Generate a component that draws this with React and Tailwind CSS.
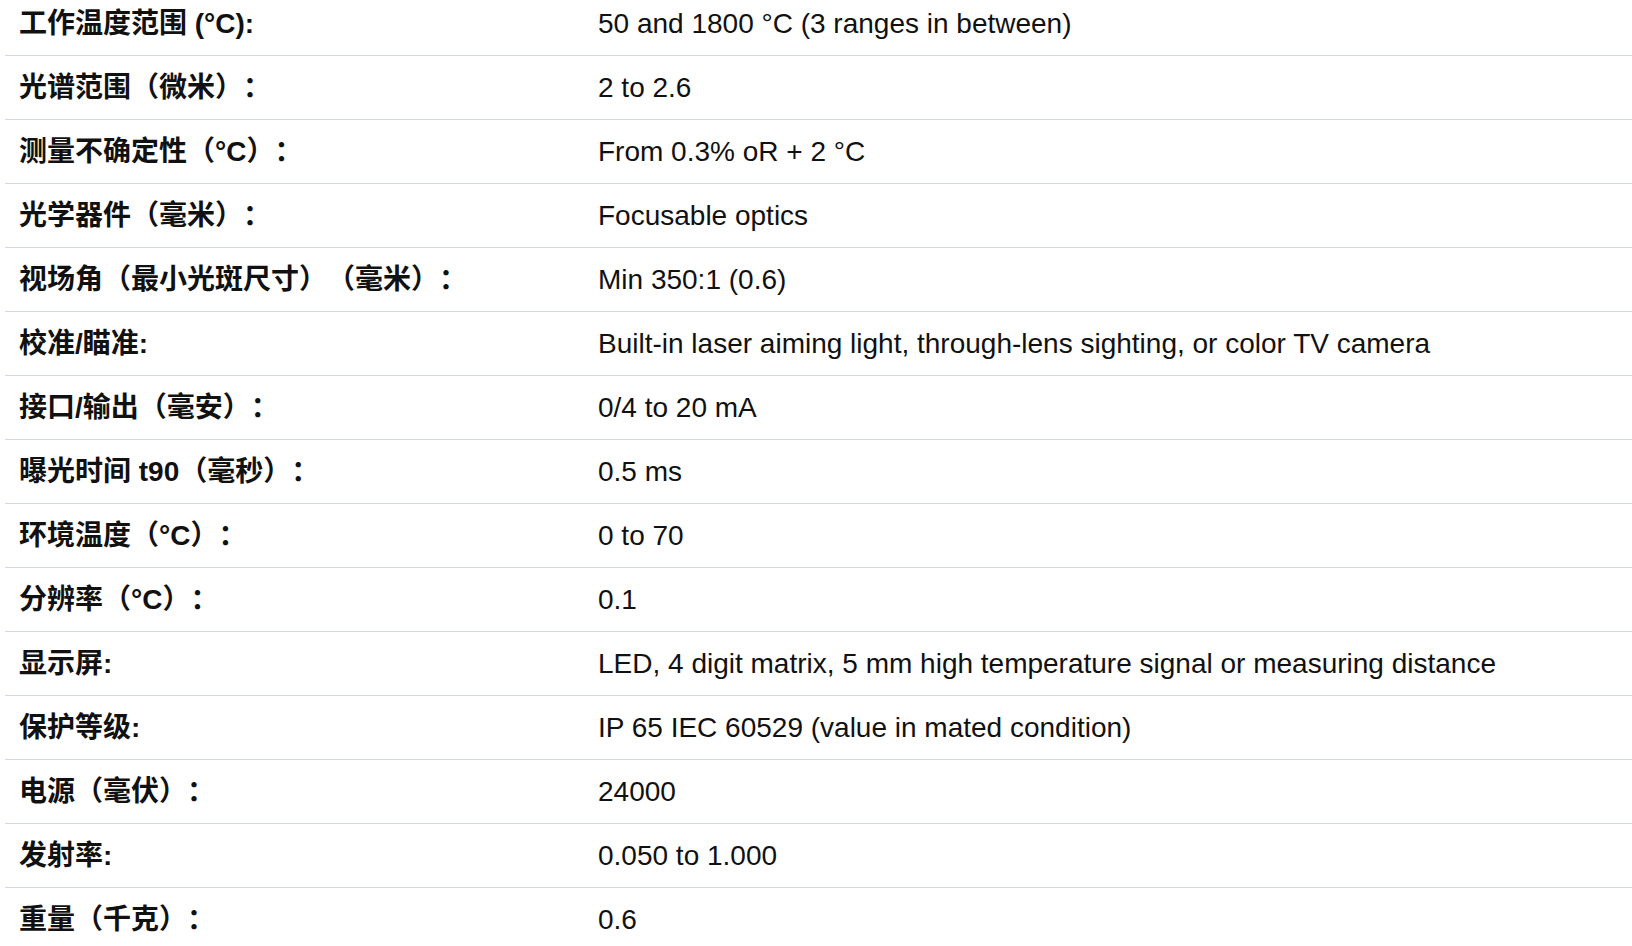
const rows = [
  ["工作温度范围 (°C):", "50 and 1800 °C (3 ranges in between)"],
  ["光谱范围（微米）：", "2 to 2.6"],
  ["测量不确定性（°C）：", "From 0.3% oR + 2 °C"],
  ["光学器件（毫米）：", "Focusable optics"],
  ["视场角（最小光斑尺寸）（毫米）：", "Min 350:1 (0.6)"],
  ["校准/瞄准:", "Built-in laser aiming light, through-lens sighting, or color TV camera"],
  ["接口/输出（毫安）：", "0/4 to 20 mA"],
  ["曝光时间 t90（毫秒）：", "0.5 ms"],
  ["环境温度（°C）：", "0 to 70"],
  ["分辨率（°C）：", "0.1"],
  ["显示屏:", "LED, 4 digit matrix, 5 mm high temperature signal or measuring distance"],
  ["保护等级:", "IP 65 IEC 60529 (value in mated condition)"],
  ["电源（毫伏）：", "24000"],
  ["发射率:", "0.050 to 1.000"],
  ["重量（千克）：", "0.6"],
];

export default function App() {
  return (
    <div className="w-[1632px] h-[946px] overflow-hidden bg-white">
      <div className="ml-[5px] mt-[-8px] flex flex-col">
        {rows.map(([k, v], i) => (
          <div key={i} className="flex h-[64px] items-center border-b border-[#cfd8de]">
            <div
              className="w-[579px] pl-[14px] text-[28px] font-bold text-[#111] whitespace-nowrap [text-spacing-trim:space-all]"
              style={{ fontFamily: '"Liberation Sans", "Noto Sans CJK SC", sans-serif' }}
            >
              {k}
            </div>
            <div
              className="flex-1 pl-[14px] text-[28px] text-[#111] whitespace-nowrap"
              style={{ fontFamily: '"Liberation Sans", "Noto Sans CJK SC", sans-serif' }}
            >
              {v}
            </div>
          </div>
        ))}
      </div>
    </div>
  );
}
